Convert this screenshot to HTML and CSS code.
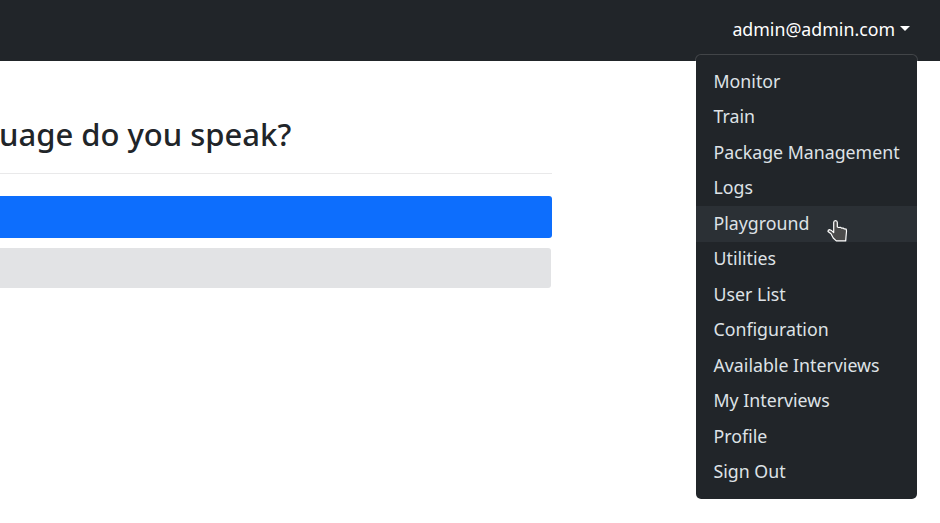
FILE: index.html
```html
<!DOCTYPE html>
<html lang="en">
<head>
<meta charset="utf-8">
<title>Interview</title>
<link rel="stylesheet" href="styles.css">
</head>
<body>
<header class="navbar">
  <div class="account">
    <a class="toggle">admin@admin.com<span class="caret"></span></a>
    <nav class="menu">
      <a class="item">Monitor</a>
      <a class="item">Train</a>
      <a class="item">Package Management</a>
      <a class="item">Logs</a>
      <a class="item active">Playground</a>
      <a class="item">Utilities</a>
      <a class="item">User List</a>
      <a class="item">Configuration</a>
      <a class="item">Available Interviews</a>
      <a class="item">My Interviews</a>
      <a class="item">Profile</a>
      <a class="item">Sign Out</a>
    </nav>
  </div>
</header>
<main class="content">
  <h1 class="question">uage do you speak?</h1>
  <div class="choice primary"></div>
  <div class="choice secondary"></div>
</main>
<svg class="cursor" width="22" height="24" viewBox="0 0 22 24"><path d="M6.7 13V3.6q0-1.9 1.8-1.9t1.8 1.9V8l1.3.5 1.7-.2 1.2.8 1.6-.1 1.2.9 1.9.3.3 2-.5 5.5-.3 4.2H9.3L6.2 19 4 14.8 1 12.6q-.2-1.8 1.5-2 1.8.2 4.2 3z" fill="#4b4b4b" stroke="#fff" stroke-width="1.2" stroke-linejoin="round"/></svg>
</body>
</html>
```
FILE: styles.css
```css
* { box-sizing: border-box; }
body {
  margin: 0;
  height: 523px;
  overflow: hidden;
  position: relative;
  background: #fff;
  color: #212529;
  font-family: "Noto Sans", sans-serif;
  font-size: 17.75px;
}
.navbar {
  height: 61px;
  background: #212529;
  display: flex;
  justify-content: flex-end;
  padding-right: 22px;
}
.account {
  position: relative;
  padding: 16px 8px 0 0;
  line-height: 27px;
}
.toggle { color: #fff; display: flex; align-items: flex-start; }
.caret {
  margin: 10px 0 0 5px;
  border: 5px solid transparent;
  border-top-color: #fff;
  border-bottom: 0;
}
.menu {
  position: absolute;
  top: 54px;
  right: 0;
  width: 223px;
  height: 446px;
  padding: 9px 0;
  background: #212529;
  background-clip: padding-box;
  border: 1px solid rgba(255, 255, 255, 0.15);
  border-radius: 6px;
}
.item {
  display: block;
  height: 35.5px;
  padding: 3.6px 17.5px;
  color: #dee2e6;
  white-space: nowrap;
}
.item.active { background: #2b3035; }
.content { width: 552px; padding-top: 52px; }
.question {
  margin: 0 0 22px;
  height: 61px;
  border-bottom: 1px solid #e9e9ea;
  font-size: 31px;
  font-weight: 500;
  line-height: 43px;
  text-indent: -1px;
}
.choice { height: 42px; margin-bottom: 10px; border-radius: 0 3px 3px 0; }
.primary { background: #0d6efd; }
.secondary { background: #e2e3e5; width: 551px; height: 40px; }
.cursor { position: absolute; left: 827px; top: 219px; }
```
